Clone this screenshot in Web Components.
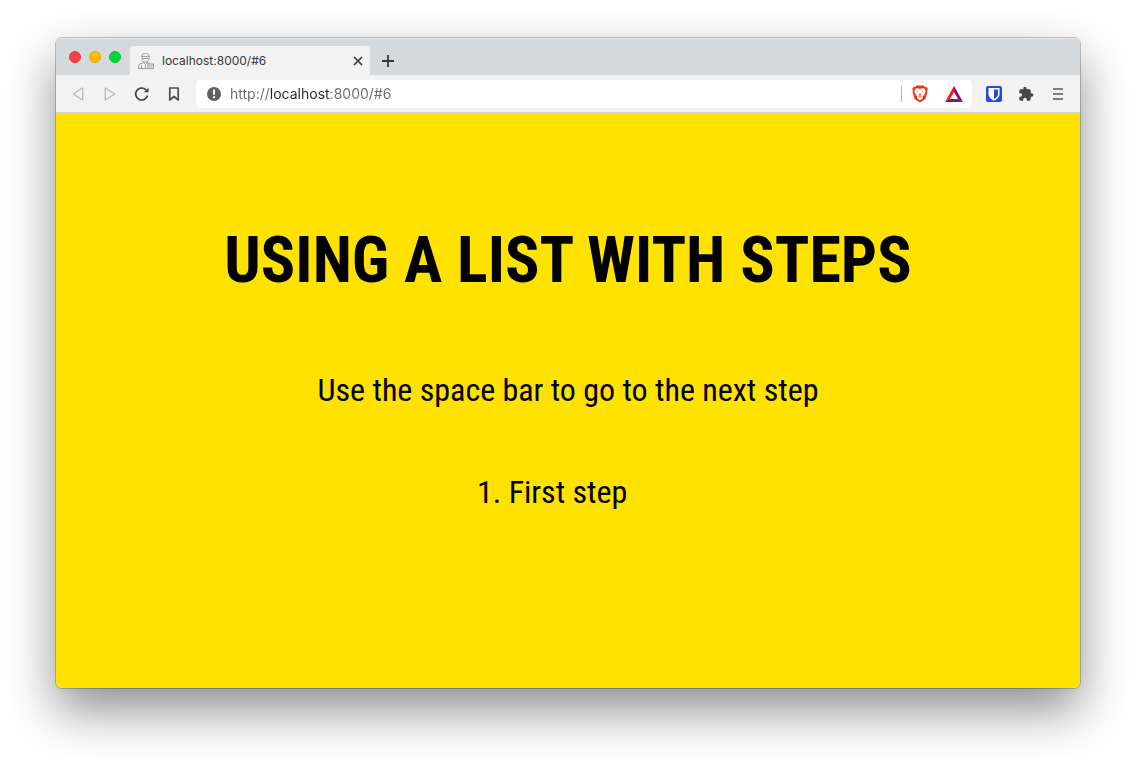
<!DOCTYPE html>
<html lang="en">
<head>
<meta charset="utf-8">
<title>Using a list with steps</title>
<style>
html, body { margin: 0; background: #fff; }
body { box-sizing: border-box; min-height: 100vh; padding: 38px 56px 74px; display: flex; font-family: Inter, Roboto, "Liberation Sans", sans-serif; }
browser-window { flex: 1; }
</style>
</head>
<body>
<browser-window>
  <tab-strip slot="tabs">localhost:8000/#6</tab-strip>
  <tool-bar slot="toolbar" url="http://localhost:8000/#6"></tool-bar>
  <step-slide>
    <span slot="title">Using a list with steps</span>
    <span slot="intro">Use the space bar to go to the next step</span>
    <span slot="step">First step</span>
  </step-slide>
</browser-window>
<script>
class ShadowElement extends HTMLElement {
  connectedCallback() {
    if (!this.shadowRoot) this.attachShadow({ mode: "open" }).innerHTML = this.template();
  }
}

customElements.define("browser-window", class extends ShadowElement {
  template() {
    return `<style>
      :host { display: flex; flex-direction: column; border-radius: 6px; background: #f2f2f2;
        box-shadow: 0 0 0 1px rgba(0,0,0,.22), 0 22px 50px rgba(0,0,0,.45); }
      main { flex: 1; display: flex; border-radius: 0 0 6px 6px; overflow: hidden; }
      </style><slot name="tabs"></slot><slot name="toolbar"></slot><main><slot></slot></main>`;
  }
});

customElements.define("tab-strip", class extends ShadowElement {
  template() {
    return `<style>
      :host { display: flex; align-items: flex-end; height: 37px; background: #d5d9dc; border-radius: 6px 6px 0 0; box-shadow: inset 0 1px #e8eaeb; }
      .lights { display: flex; gap: 8px; padding: 0 9px 12px 13px; }
      .lights button { box-sizing: border-box; width: 12px; height: 12px; border-radius: 50%; }
      button { border: 0; padding: 0; background: none; }
      svg { display: block; }
      .lights .close { background: #ff4048; border: 1px solid #ef2c3b; }
      .lights .min { background: #ffbd00; border: 1px solid #e9a300; }
      .lights .max { background: #00d83c; border: 1px solid #00c22f; }
      .tab { box-sizing: border-box; width: 240px; height: 29px; display: flex; align-items: center; padding: 0 6px 0 8px; border-radius: 4px 4px 0 0; background: #f2f2f2; }
      .label { flex: 1; margin-left: 8px; font-size: 12px; line-height: 16px; color: #37393b; }
      .add { padding: 0 0 8px 12px; }
      </style>
      <div class="lights"><button class="close" aria-label="Close window"></button><button class="min" aria-label="Minimise"></button><button class="max" aria-label="Maximise"></button></div>
      <div class="tab">
        <svg width="16" height="16" viewBox="0 0 16 16" fill="none" stroke="#8d999e" stroke-width=".9"><path d="M4 3.500C4 1 5 .6 7.500.6S11 1 11 3.500V6C11 8 9 9 7.500 9S4 8 4 6ZM3.500 3.500h8M4.500 5.500h6M6 8.500v1.500l1.500 1.500L9 10V8.500M6 9.500 1.500 11Q.5 12 .5 15.500h9M9 9.500l3 1M3.500 12v3M7.500 11.500v4"/><rect x="10" y="11" width="5.500" height="4.500" fill="#e1e5e6"/><path d="m11.500 13 1 1 2-2"/></svg>
        <span class="label"><slot></slot></span>
        <button aria-label="Close tab"><svg width="12" height="12" viewBox="0 0 12 12" fill="none" stroke="#37393b" stroke-width="1.700"><path d="m2 2 8 8M10 2l-8 8"/></svg></button>
      </div>
      <button class="add" aria-label="New tab"><svg width="12" height="12" viewBox="0 0 12 12" fill="none" stroke="#37393b" stroke-width="1.800"><path d="M6 0v12M0 6h12"/></svg></button>`;
  }
});

customElements.define("tool-bar", class extends ShadowElement {
  template() {
    return `<style>
      :host { box-sizing: border-box; display: flex; align-items: center; height: 38px; padding: 0 14px; border-bottom: 1px solid #d3d5d7; background: #f2f2f2; }
      button { border: 0; padding: 0; background: none; }
      svg { display: block; }
      .nav, .ext { display: flex; gap: 16px; }
      .nav { margin-right: 14px; }
      .ext { margin-left: 14px; }
      .address { flex: 1; min-width: 0; box-sizing: border-box; height: 28px; display: flex; align-items: center; padding: 0 9px 0 10px; border-radius: 4px; background: #fff; }
      input { flex: 1; min-width: 0; height: 20px; margin: 0 8px; padding: 0; border: 0; outline: 0; font: inherit; font-size: 14px; color: #5f6163;
        background: linear-gradient(90deg, #696b6d 40px, #242628 40px 101px, #696b6d 101px); -webkit-background-clip: text; background-clip: text; -webkit-text-fill-color: transparent; }
      .rule { width: 1px; height: 16px; margin-right: 10px; background: #b4b6b8; }
      .shield { margin-right: 17px; }
      </style>
      <div class="nav">
        <button aria-label="Back"><svg width="16" height="16" viewBox="0 0 16 16" fill="none" stroke="#b9bbbd" stroke-width="1.400" stroke-linejoin="round"><path d="M12.700 2v12L3.200 8Z"/></svg></button>
        <button aria-label="Forward"><svg width="16" height="16" viewBox="0 0 16 16" fill="none" stroke="#b9bbbd" stroke-width="1.400" stroke-linejoin="round"><path d="M3.300 2v12l9.500-6Z"/></svg></button>
        <button aria-label="Reload"><svg width="16" height="16" viewBox="0 0 16 16" fill="none" stroke="#3d3f41" stroke-width="1.700"><path d="M13.500 9.500A6 6 0 1 1 12 3.800"/><path d="M9.800 6.200h4.700V1.800Z" fill="#3d3f41" stroke="none"/></svg></button>
        <button aria-label="Bookmark"><svg width="16" height="16" viewBox="0 0 16 16" fill="none" stroke="#4b4d4f" stroke-width="1.700" stroke-linejoin="round"><path d="M3.800 2h8.400v12L8 10.500 3.800 14Z"/></svg></button>
      </div>
      <div class="address">
        <svg width="16" height="16" viewBox="0 0 16 16"><circle cx="8" cy="8" r="7" fill="#5f6163"/><path d="M8 3.500v5.300M8 10.300v2" stroke="#fff" stroke-width="1.900"/></svg>
        <input type="text" aria-label="Address" spellcheck="false" value="${this.getAttribute("url")}">
        <span class="rule"></span>
        <button class="shield" aria-label="Shields"><svg width="16" height="18" viewBox="0 0 16 18"><path d="M4.500.5h7l1.200 1.300 1.800.1 1.300 2.200-.7 1.400.4 1.300-2 7L8 17.500l-5.500-3.700-2-7 .4-1.300L.2 4.100l1.300-2.200 1.800-.1Z" fill="#fb2b0b"/><path d="M3.500 3.500 6 3.300l2 .6 2-.6 2.500.2 1.300 2.700-1.100 2.800-2 2.700.3 1.400L8 15.500l-3-2.400.3-1.400-2-2.700-1.100-2.800Z" fill="#fff"/><path d="m5 6.500 1.200.3M11 6.500l-1.200.3M7.500 8.500 7 10l1 .5 1-.5-.5-1.500M6.500 12l1.500-.6 1.500.6" fill="none" stroke="#fb2b0b" stroke-width=".8"/></svg></button>
        <button aria-label="Rewards"><svg width="18" height="16" viewBox="0 0 18 16"><path d="M9 0 0 16l5-3 4-7Z" fill="#ff1d00"/><path d="m9 0 9 16-5-3-4-7Z" fill="#9e0060"/><path d="M0 16h18l-5-3H5Z" fill="#5d1f91"/></svg></button>
      </div>
      <div class="ext">
        <button aria-label="Password manager"><svg width="16" height="16" viewBox="0 0 16 16"><rect width="16" height="16" rx="2" fill="#2849dc"/><path d="M2.500 2h11v6.200c0 3-2.500 5-5.500 6.600-3-1.600-5.500-3.600-5.500-6.600Z" fill="#fff"/><path d="M8 3.500h4v4.700c0 2-1.700 3.600-4 4.900Z" fill="#2849dc"/></svg></button>
        <button aria-label="Extensions"><svg width="16" height="16" viewBox="0 0 24 24" fill="#454749"><path d="M20.500 11H19V7c0-1.100-.9-2-2-2h-4V3.500a2.500 2.500 0 0 0-5 0V5H4c-1.100 0-2 .9-2 2v3.800h1.500a2.700 2.700 0 0 1 0 5.400H2V20c0 1.100.9 2 2 2h3.800v-1.500a2.700 2.700 0 0 1 5.400 0V22H17c1.100 0 2-.9 2-2v-4h1.500a2.500 2.500 0 0 0 0-5Z"/></svg></button>
        <button aria-label="Menu"><svg width="16" height="16" viewBox="0 0 16 16" stroke="#55575a" stroke-width="1.600"><path d="M3 3h10M3 8h10M3 13h10"/></svg></button>
      </div>`;
  }
});

customElements.define("step-slide", class extends ShadowElement {
  template() {
    return `<style>
      :host { flex: 1; box-sizing: border-box; display: flex; flex-direction: column; align-items: center; padding: 110px 32px 32px;
        background: #ffe200; color: #000; font-family: "Roboto Condensed", "Liberation Sans Narrow", Roboto, sans-serif; }
      h1 { margin: 0; font-size: 64px; line-height: 76px; font-weight: 700; text-transform: uppercase; white-space: nowrap; }
      p, ol { font-size: 32px; line-height: 38px; }
      p { margin: 72px 0 64px; }
      ol { margin: 0; padding: 0; }
      </style>
      <h1><slot name="title"></slot></h1>
      <p><slot name="intro"></slot></p>
      <ol><li><slot name="step"></slot></li></ol>`;
  }
});
</script>
</body>
</html>
